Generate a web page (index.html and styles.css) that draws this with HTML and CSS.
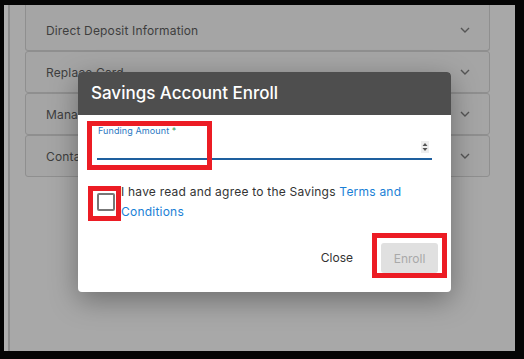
FILE: index.html
```html
<!DOCTYPE html>
<html lang="en">
<head>
<meta charset="utf-8">
<title>Savings Account Enroll</title>
<link rel="stylesheet" href="styles.css">
</head>
<body>
<div class="screen">
  <div class="page">
    <div class="rail"></div>
    <div class="content">
      <div class="card card-first">
        <span class="card-title">Direct Deposit Information</span>
        <svg class="chev" viewBox="0 0 10 6" width="10" height="6"><path d="M1 1 L5 5 L9 1" fill="none" stroke="#555" stroke-width="1.4"/></svg>
      </div>
      <div class="card">
        <span class="card-title">Replace Card</span>
        <svg class="chev" viewBox="0 0 10 6" width="10" height="6"><path d="M1 1 L5 5 L9 1" fill="none" stroke="#555" stroke-width="1.4"/></svg>
      </div>
      <div class="card">
        <span class="card-title">Manage Card</span>
        <svg class="chev" viewBox="0 0 10 6" width="10" height="6"><path d="M1 1 L5 5 L9 1" fill="none" stroke="#555" stroke-width="1.4"/></svg>
      </div>
      <div class="card">
        <span class="card-title">Contact Us</span>
        <svg class="chev" viewBox="0 0 10 6" width="10" height="6"><path d="M1 1 L5 5 L9 1" fill="none" stroke="#555" stroke-width="1.4"/></svg>
      </div>
    </div>
  </div>

  <div class="modal">
    <div class="modal-header">Savings Account Enroll</div>
    <div class="modal-body">
      <div class="field">
        <label class="field-label">Funding Amount <span class="req">*</span></label>
        <div class="field-input">
          <span class="spinner">
            <svg viewBox="0 0 8 12" width="8" height="12"><path d="M4 2 L6.5 5 L1.5 5 Z M4 10 L6.5 7 L1.5 7 Z" fill="#555"/></svg>
          </span>
        </div>
      </div>
      <div class="agree">
        <span class="checkbox"></span>
        <p class="agree-text">I have read and agree to the Savings <a class="link">Terms and Conditions</a></p>
      </div>
    </div>
    <div class="modal-footer">
      <button class="btn btn-close">Close</button>
      <button class="btn btn-enroll">Enroll</button>
    </div>
    <div class="mark mark-field"></div>
    <div class="mark mark-check"></div>
    <div class="mark mark-enroll"></div>
  </div>
</div>
</body>
</html>
```

FILE: styles.css
```css
* { box-sizing: border-box; }
html, body { margin: 0; padding: 0; }
body {
  width: 524px;
  height: 359px;
  overflow: hidden;
  font-family: Inter, "Noto Sans", sans-serif;
  background: #000;
}
.screen {
  position: relative;
  width: 524px;
  height: 359px;
  background: #050505;
  padding: 5px 9px 8px 4px;
}
.page {
  display: flex;
  height: 346px;
  background: #a8a8a8;
  overflow: hidden;
}
.rail {
  width: 6px;
  flex: none;
  background: #b1b1b1;
  border-right: 2px solid #8e8e8e;
}
.content {
  flex: 1;
  padding: 0 25px 0 15px;
  display: flex;
  flex-direction: column;
}
.card {
  height: 42px;
  flex: none;
  display: flex;
  align-items: center;
  justify-content: space-between;
  padding: 0 19px 0 20px;
  background: #a5a5a5;
  border: 1px solid #8f8f8f;
  border-radius: 3px;
}
.card-first {
  height: 46px;
  border-top: none;
  border-radius: 0 0 3px 3px;
  padding-top: 5px;
}
.card-title {
  font-size: 12px;
  letter-spacing: 0.15px;
  color: #3e3e3e;
}
.chev { display: block; }

.modal {
  position: absolute;
  left: 78px;
  top: 72px;
  width: 373px;
  height: 220px;
  background: #fff;
  border-radius: 4px;
  box-shadow: 0 8px 28px rgba(0,0,0,0.35);
  display: flex;
  flex-direction: column;
}
.modal-header {
  height: 43px;
  background: #4e4e4e;
  border-radius: 4px 4px 0 0;
  color: #fff;
  font-size: 17px;
  font-weight: 500;
  line-height: 43px;
  padding-left: 13px;
}
.modal-body {
  padding: 11px 19px 0 19px;
}
.field-label {
  display: block;
  font-size: 9px;
  line-height: 10px;
  letter-spacing: 0.1px;
  color: #2a78c2;
  padding-left: 1px;
}
.req { color: #3a9a5a; }
.field-input {
  height: 24px;
  border-bottom: 2px solid #1e5f9e;
  display: flex;
  align-items: center;
  justify-content: flex-end;
  padding-right: 3px;
}
.spinner {
  display: flex;
  width: 8px;
  height: 12px;
  background: #eee;
}
.agree {
  margin-top: 22px;
  display: flex;
  align-items: center;
}
.checkbox {
  flex: none;
  width: 18px;
  height: 18px;
  border: 2px solid #777;
  border-radius: 2px;
  margin: 0 6px 0 0;
}
.agree-text {
  margin: 0;
  font-size: 12px;
  line-height: 20px;
  letter-spacing: 0.22px;
  color: #333;
}
.link { color: #1a7fd6; }

.modal-footer {
  margin-top: auto;
  display: flex;
  justify-content: flex-end;
  align-items: center;
  gap: 14px;
  padding: 0 13px 19px 0;
}
.btn {
  font-family: inherit;
  font-size: 12px;
  border: none;
  height: 30px;
  border-radius: 3px;
  cursor: pointer;
}
.btn-close {
  background: transparent;
  color: #333;
  padding: 0 14px;
  line-height: 28px;
}
.btn-enroll {
  width: 57px;
  background: #e0e0e0;
  color: #a9a9a9;
}

.mark {
  position: absolute;
  border: 5px solid #ec1c24;
}
.mark-field { left: 9px; top: 49px; width: 125px; height: 49px; }
.mark-check { left: 10px; top: 114px; width: 33px; height: 35px; }
.mark-enroll { left: 294px; top: 161px; width: 75px; height: 45px; }
```
